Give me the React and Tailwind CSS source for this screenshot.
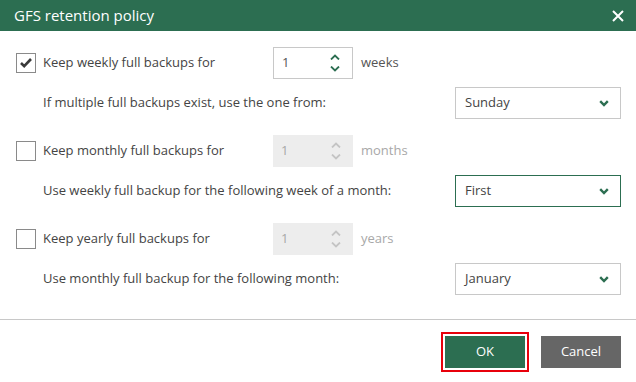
import React from "react";

const font = { fontFamily: '"Open Sans", "Noto Sans", sans-serif' };

function Check({ checked }) {
  return (
    <div className="w-5 h-5 border border-[#8a8a8a] bg-white flex items-center justify-center shrink-0">
      {checked && (
        <svg width="14" height="12" viewBox="0 0 14 12">
          <path d="M2 6 L5.2 9.2 L12 2" fill="none" stroke="#3a3a3a" strokeWidth="2.6" />
        </svg>
      )}
    </div>
  );
}

function Spinner({ disabled }) {
  const c = disabled ? "#c4c4c4" : "#2c6e51";
  return (
    <div
      className={
        "w-20 h-8 flex items-center justify-between pl-2 pr-3 " +
        (disabled ? "bg-[#ededed] text-[#a8a8a8]" : "bg-white border border-[#c8c8c8] text-[#555]")
      }
    >
      <span className="text-[13px]">1</span>
      <div className="flex flex-col gap-[6px]">
        <svg width="10" height="6" viewBox="0 0 10 6">
          <path d="M1 5.5 L5 1.5 L9 5.5" fill="none" stroke={c} strokeWidth="1.8" />
        </svg>
        <svg width="10" height="6" viewBox="0 0 10 6">
          <path d="M1 0.5 L5 4.5 L9 0.5" fill="none" stroke={c} strokeWidth="1.8" />
        </svg>
      </div>
    </div>
  );
}

function Select({ value, active }) {
  return (
    <div
      className={
        "w-[166px] h-8 flex items-center justify-between pl-[9px] pr-[11px] bg-white border " +
        (active ? "border-[#2c6e51]" : "border-[#c8c8c8]")
      }
    >
      <span className="text-[13px] text-[#444]">{value}</span>
      <svg width="10" height="7" viewBox="0 0 10 7">
        <path d="M1.2 1.2 L5 5 L8.8 1.2" fill="none" stroke="#2c6e51" strokeWidth="2.4" />
      </svg>
    </div>
  );
}

function Group({ checked, label, unit, sub, value, active }) {
  const disabled = !checked;
  return (
    <div className="flex flex-col gap-2">
      <div className="flex items-center h-8">
        <div className="w-[27px] shrink-0"><Check checked={checked} /></div>
        <span className="w-[230px] shrink-0 text-[13px] text-[#444]">{label}</span>
        <Spinner disabled={disabled} />
        <span className={"ml-2 text-[13px] " + (disabled ? "text-[#a8a8a8]" : "text-[#555]")}>{unit}</span>
      </div>
      <div className="flex items-center h-8 pl-[27px]">
        <span className="w-[412px] shrink-0 text-[13px] text-[#444]">{sub}</span>
        <Select value={value} active={active} />
      </div>
    </div>
  );
}

export default function App() {
  return (
    <div className="w-[636px] h-[382px] bg-white flex flex-col" style={font}>
      <div className="h-[31px] bg-[#2c6e51] flex items-center justify-between pl-[14px] pr-[12px] shrink-0">
        <span className="text-white text-[15px]">GFS retention policy</span>
        <svg width="12" height="12" viewBox="0 0 12 12">
          <path d="M1 1 L11 11 M11 1 L1 11" stroke="white" strokeWidth="2" />
        </svg>
      </div>
      <div className="flex flex-col gap-4 pt-4 pl-4 h-[288px] shrink-0">
        <Group checked label="Keep weekly full backups for" unit="weeks" sub="If multiple full backups exist, use the one from:" value="Sunday" />
        <Group label="Keep monthly full backups for" unit="months" sub="Use weekly full backup for the following week of a month:" value="First" active />
        <Group label="Keep yearly full backups for" unit="years" sub="Use monthly full backup for the following month:" value="January" />
      </div>
      <div className="h-px bg-[#c8c8c8] shrink-0" />
      <div className="flex justify-end items-center gap-3 pr-[15px] pt-[12px]">
        <div className="p-[2px] border-2 border-[#e8000b]">
          <button className="w-20 h-8 bg-[#2c6e51] text-white text-[13px]">OK</button>
        </div>
        <button className="w-20 h-8 bg-[#666666] text-white text-[13px]">Cancel</button>
      </div>
    </div>
  );
}
